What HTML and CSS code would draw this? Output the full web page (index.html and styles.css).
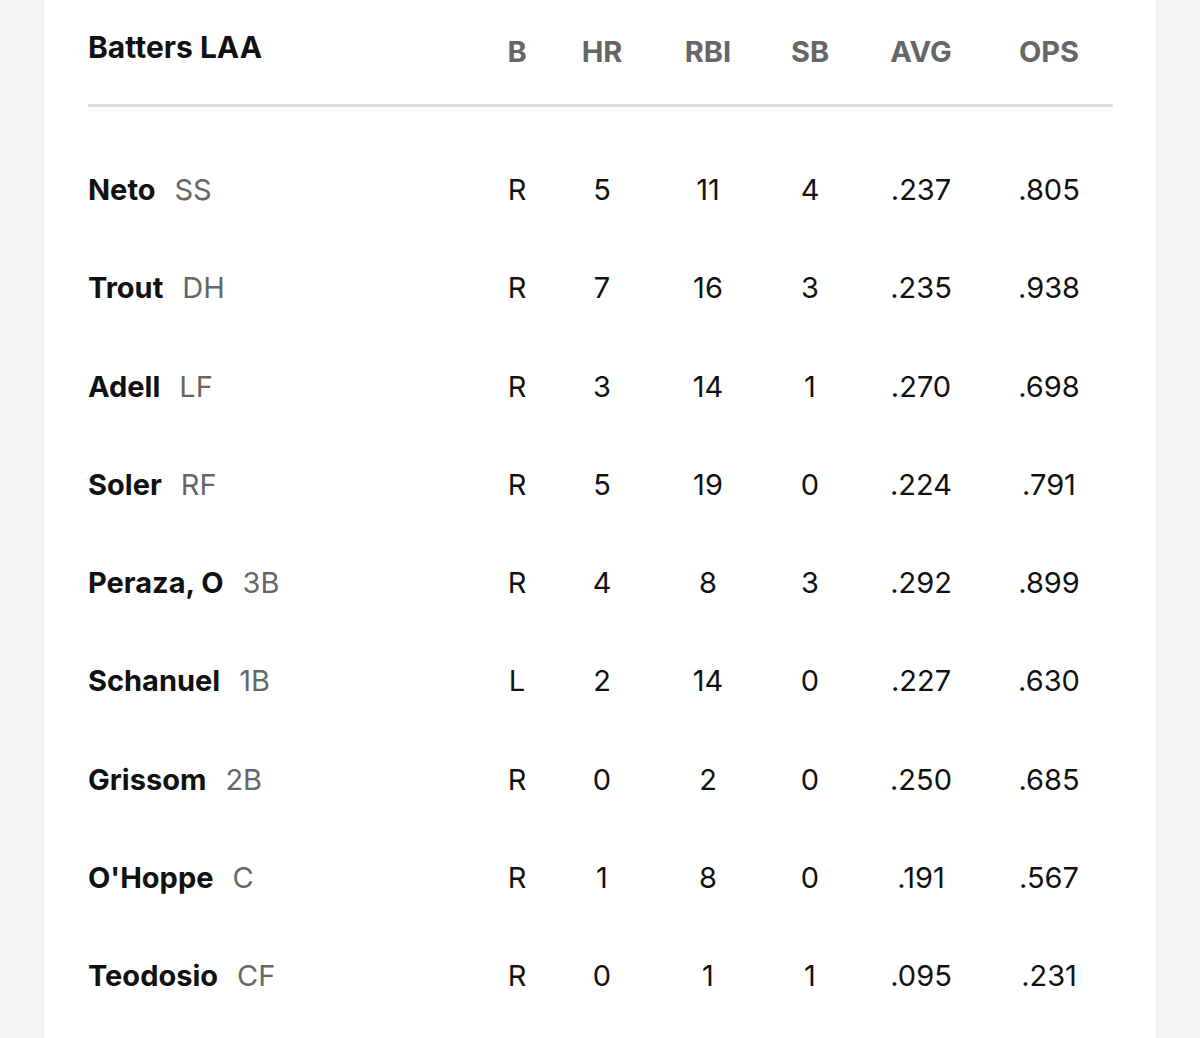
FILE: index.html
```html
<!DOCTYPE html>
<html lang="en">
<head>
<meta charset="utf-8">
<title>Batters LAA</title>
<link rel="stylesheet" href="styles.css">
</head>
<body>
<div class="page">
  <section class="card">
    <div class="grid head">
      <div class="title">Batters LAA</div>
      <div class="lbl">B</div>
      <div class="lbl">HR</div>
      <div class="lbl">RBI</div>
      <div class="lbl">SB</div>
      <div class="lbl">AVG</div>
      <div class="lbl">OPS</div>
    </div>
    <div class="divider"></div>
    <div class="rows">
      <div class="grid row"><div class="name">Neto<span class="pos">SS</span></div><div class="c">R</div><div class="c">5</div><div class="c">11</div><div class="c">4</div><div class="c">.237</div><div class="c">.805</div></div>
      <div class="grid row"><div class="name">Trout<span class="pos">DH</span></div><div class="c">R</div><div class="c">7</div><div class="c">16</div><div class="c">3</div><div class="c">.235</div><div class="c">.938</div></div>
      <div class="grid row"><div class="name">Adell<span class="pos">LF</span></div><div class="c">R</div><div class="c">3</div><div class="c">14</div><div class="c">1</div><div class="c">.270</div><div class="c">.698</div></div>
      <div class="grid row"><div class="name">Soler<span class="pos">RF</span></div><div class="c">R</div><div class="c">5</div><div class="c">19</div><div class="c">0</div><div class="c">.224</div><div class="c">.791</div></div>
      <div class="grid row"><div class="name">Peraza, O<span class="pos">3B</span></div><div class="c">R</div><div class="c">4</div><div class="c">8</div><div class="c">3</div><div class="c">.292</div><div class="c">.899</div></div>
      <div class="grid row"><div class="name">Schanuel<span class="pos">1B</span></div><div class="c">L</div><div class="c">2</div><div class="c">14</div><div class="c">0</div><div class="c">.227</div><div class="c">.630</div></div>
      <div class="grid row"><div class="name">Grissom<span class="pos">2B</span></div><div class="c">R</div><div class="c">0</div><div class="c">2</div><div class="c">0</div><div class="c">.250</div><div class="c">.685</div></div>
      <div class="grid row"><div class="name">O'Hoppe<span class="pos">C</span></div><div class="c">R</div><div class="c">1</div><div class="c">8</div><div class="c">0</div><div class="c">.191</div><div class="c">.567</div></div>
      <div class="grid row"><div class="name">Teodosio<span class="pos">CF</span></div><div class="c">R</div><div class="c">0</div><div class="c">1</div><div class="c">1</div><div class="c">.095</div><div class="c">.231</div></div>
    </div>
  </section>
</div>
</body>
</html>
```
FILE: styles.css
```css
html, body {
  margin: 0;
  padding: 0;
  background: #f3f3f3;
  font-family: Inter, Lato, "Liberation Sans", sans-serif;
}

.page {
  height: 1038px;
  overflow: hidden;
  padding-left: 43px;
}

.card {
  width: 1114px;
  height: 1038px;
  box-sizing: border-box;
  background: #fff;
  border-left: 1px solid #ebebeb;
  border-right: 1px solid #ebebeb;
  padding: 0 43px 0 44px;
}

.grid {
  display: grid;
  grid-template-columns: 395px 68px 102px 110px 94px 128px 128px;
  font-size: 29px;
  line-height: 36px;
}

.head {
  height: 104px;
  align-items: start;
}

.title {
  padding-top: 29px;
  font-size: 30px;
  font-weight: 700;
  color: #111;
}

.lbl {
  padding-top: 34px;
  text-align: center;
  font-weight: 700;
  color: #666;
}

.divider {
  height: 3px;
  background: #dedede;
}

.rows {
  padding-top: 34px;
}

.row {
  height: 98.25px;
  align-items: center;
  color: #111;
}

.name {
  font-weight: 700;
}

.pos {
  font-weight: 400;
  color: #666;
  margin-left: 19px;
}

.c {
  text-align: center;
}
```
